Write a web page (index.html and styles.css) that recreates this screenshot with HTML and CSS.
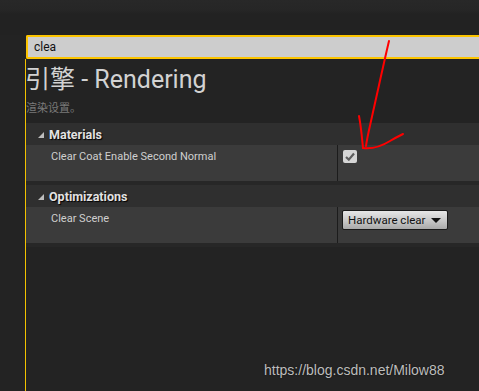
FILE: index.html
```html
<!DOCTYPE html>
<html lang="zh">
<head>
  <meta charset="UTF-8">
  <title>引擎 - Rendering</title>
  <link rel="stylesheet" href="styles.css">
</head>
<body>
  <div class="top-band"></div>

  <div class="search-box">
    <span class="search-text">clea</span>
  </div>

  <div class="panel">
    <h1 class="panel-title">引擎 - Rendering</h1>
    <p class="panel-desc">渲染设置。</p>

    <div class="category">
      <div class="category-head"><span class="arrow"></span>Materials</div>
      <div class="prop-row">
        <div class="prop-name">Clear Coat Enable Second Normal</div>
        <div class="prop-value">
          <span class="checkbox">
            <svg width="10" height="9" viewBox="0 0 10 9">
              <path d="M1 5 L3.8 7.6 L9 1.5" fill="none" stroke="#5e5e5e" stroke-width="2.2"/>
            </svg>
          </span>
        </div>
      </div>
    </div>

    <div class="category">
      <div class="category-head"><span class="arrow"></span>Optimizations</div>
      <div class="prop-row">
        <div class="prop-name">Clear Scene</div>
        <div class="prop-value">
          <span class="combo">Hardware clear<span class="combo-arrow"></span></span>
        </div>
      </div>
    </div>
  </div>

  <!-- 手描きの赤い矢印 -->
  <svg class="annotation" width="479" height="391" viewBox="0 0 479 391">
    <path d="M389 41 C384 62 378 90 373 112 C370 126 367 138 366 146" fill="none" stroke="#f00" stroke-width="2" stroke-linecap="round"/>
    <path d="M359 116 C361 126 362 138 363 148 C372 149 382 146 390 141 C395 138 399 136 403 134" fill="none" stroke="#f00" stroke-width="2" stroke-linecap="round"/>
  </svg>

  <div class="watermark">https://blog.csdn.net/Milow88</div>
</body>
</html>
```

FILE: styles.css
```css
* {
  margin: 0;
  padding: 0;
  box-sizing: border-box;
}

body {
  width: 479px;
  height: 391px;
  overflow: hidden;
  background: #232323;
  font-family: Roboto, "Noto Sans CJK SC", sans-serif;
  position: relative;
}

.top-band {
  height: 35px;
  background: linear-gradient(to bottom, #282828 0px, #262626 10px, #222222 14px, #222222 100%);
}

.search-box {
  margin-left: 26px;
  height: 24px;
  background: #cdcdcd;
  border: 2px solid #fcc400;
  border-right: none;
  border-radius: 2px 0 0 2px;
  padding-left: 6px;
  display: flex;
  align-items: center;
}

.search-text {
  font-size: 12px;
  color: #111;
}

.panel {
  margin-left: 25px;
  border-left: 1px solid #f2c200;
  height: 332px;
  background: #232323;
}

.panel-title {
  font-weight: 400;
  font-size: 25px;
  line-height: 28px;
  color: #d2d2d2;
  padding-top: 7px;
  margin-left: -1px;
  white-space: nowrap;
}

.panel-desc {
  font-size: 11px;
  line-height: 14px;
  color: #7a7a7a;
  margin-top: 8px;
  margin-bottom: 7px;
}

.category {
  border-bottom: 4px solid #272727;
}

.category-head {
  height: 22px;
  background: #2f2f2f;
  display: flex;
  align-items: center;
  font-size: 12.5px;
  font-weight: 700;
  color: #e2e2e2;
  text-shadow: 1px 1px 1px #000;
  padding-left: 12px;
}

.arrow {
  width: 0;
  height: 0;
  border-left: 6px solid transparent;
  border-bottom: 6px solid #bdbdbd;
  margin-right: 5px;
  margin-top: 1px;
}

.prop-row {
  display: flex;
  height: 36px;
  background: #3b3b3b;
}

.prop-name {
  width: 312px;
  padding: 5px 0 0 25px;
  font-size: 11px;
  color: #cfcfcf;
  border-right: 1px solid #1c1c1c;
}

.prop-value {
  flex: 1;
  display: flex;
  align-items: flex-start;
  padding: 5px 0 0 5px;
}

.checkbox {
  width: 14px;
  height: 13px;
  border-radius: 2px;
  background: #d6d6d6;
  display: flex;
  align-items: center;
  justify-content: center;
}

.combo {
  display: inline-flex;
  align-items: center;
  white-space: nowrap;
  height: 20px;
  padding: 0 6px 0 5px;
  font-size: 11.5px;
  color: #111;
  border: 1px solid #1a1a1a;
  border-radius: 2px;
  background: linear-gradient(to bottom, #e6e6e6, #c4c4c4 60%, #a9a9a9);
  margin-top: -2px;
  margin-left: -1px;
}

.combo-arrow {
  width: 0;
  height: 0;
  border-left: 5px solid transparent;
  border-right: 5px solid transparent;
  border-top: 5px solid #111;
  margin-left: 6px;
}

.annotation {
  position: absolute;
  left: 0;
  top: 0;
  pointer-events: none;
}

.watermark {
  position: absolute;
  left: 264px;
  top: 362px;
  font-family: "Liberation Sans", Arial, sans-serif;
  font-size: 14px;
  color: #bdbdbd;
  text-shadow: 0 0 2px rgba(0, 0, 0, 0.6);
}
```
